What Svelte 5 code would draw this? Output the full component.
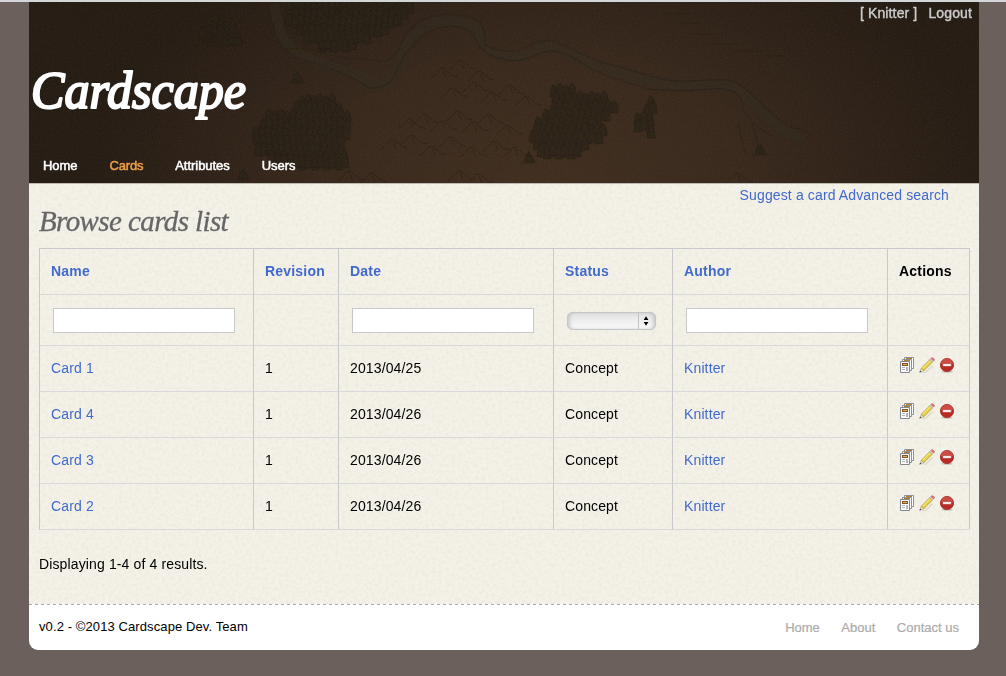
<script>
  const columns = ['Name', 'Revision', 'Date', 'Status', 'Author', 'Actions'];
  const rows = [
    { name: 'Card 1', date: '2013/04/25' },
    { name: 'Card 4', date: '2013/04/26' },
    { name: 'Card 3', date: '2013/04/26' },
    { name: 'Card 2', date: '2013/04/26' }
  ];

  // Woods on the map: each is a stack of [y, fromX, toX] rows of small trees.
  const woods = [
    [[19, 187, 198], [24, 176, 206], [31, 174, 209], [37, 176, 212]],
    [[4, 261, 386], [12, 258, 378], [20, 260, 368], [28, 268, 355], [36, 278, 340], [43, 290, 326]],
    [[99, 273, 308], [107, 265, 314], [115, 240, 318], [123, 231, 321], [131, 227, 320], [139, 225, 316], [147, 229, 317], [155, 240, 318], [162, 256, 316]],
    [[88, 525, 544], [96, 524, 576], [104, 525, 585], [112, 514, 580], [120, 509, 572], [128, 505, 576], [136, 504, 574], [144, 505, 560], [151, 512, 550]],
    [[100, 622, 627], [108, 615, 627], [116, 609, 625], [123, 606, 622], [130, 622, 627]]
  ];
  const trees = woods.flatMap((wood) =>
    wood.flatMap(([y, from, to], r) => {
      const out = [];
      for (let x = from + (r % 2) * 3; x <= to; x += 6) out.push({ x, y: y + ((x * 7) % 4) - 2 });
      return out;
    })
  );
  const huts = [[268, 78], [214, 175], [500, 158], [731, 150]];
  const hills = [
    [415, 70], [433, 62], [452, 73], [425, 90], [447, 84], [465, 94], [482, 87], [499, 98],
    [382, 121], [397, 116], [415, 123], [430, 113], [446, 124], [461, 116], [480, 127],
    [365, 141], [384, 137], [404, 148], [423, 139], [444, 149], [467, 143], [487, 149],
    [322, 173], [344, 175], [432, 173], [451, 176], [710, 175]
  ];
</script>

<div class="page">
  <header>
    <svg class="map" viewBox="0 0 950 181" aria-hidden="true">
      <defs>
        <radialGradient id="glow" gradientUnits="userSpaceOnUse" cx="0" cy="0" r="1" gradientTransform="translate(510 181) scale(450 270)">
          <stop offset="0" stop-color="#402f20" />
          <stop offset=".45" stop-color="#39291d" />
          <stop offset=".78" stop-color="#2d2118" />
          <stop offset="1" stop-color="#251c14" />
        </radialGradient>
        <filter id="grain" x="0" y="0" width="100%" height="100%">
          <feTurbulence type="fractalNoise" baseFrequency=".6 .8" numOctaves="2" seed="4" />
          <feColorMatrix values="0 0 0 0 .42  0 0 0 0 .34  0 0 0 0 .24  .5 0 0 0 -.18" />
        </filter>
        <filter id="soft"><feGaussianBlur stdDeviation=".6" /></filter>
      </defs>
      <rect width="950" height="181" fill="url(#glow)" />
      <g filter="url(#soft)" fill="none" stroke="#28241b" stroke-width="1.3" opacity=".6">
        <path stroke="#302c22" stroke-width="10" opacity=".75" d="M245 2C250 28 251 42 275 54S320 66 343 80S368 58 380 39S410 17 434 20S448 46 466 51S490 57 504 50S518 43 534 50S560 60 584 68S620 80 648 82S694 78 709 89S730 109 746 122S764 130 774 139" />
        <path d="M238 2C244 30 248 50 275 58S320 73 341 86Q361 87 368 68C378 44 400 23 426 24S440 51 473 57Q491 62 511 51Q528 45 548 58T584 76T620 87Q650 90 682 87T714 107Q728 128 744 134" />
        <path d="M252 2C257 20 259 39 283 47S318 57 333 57S362 67 372 42S407 8 437 14S447 42 463 46S484 52 499 44S522 36 541 46S566 59 590 65S625 77 646 79S695 73 710 82S735 106 751 118S769 123 782 133" />
        <path d="M709 121L716 151M723 121L731 151" />
        <path opacity=".5" d="M198 4Q165 15 160 32T138 51Q132 69 118 81M130 116Q122 132 125 148T109 180" />
      </g>
      <g filter="url(#soft)" fill="#282018" stroke="#1f1913" stroke-width=".6" opacity=".68">
        {#each trees as t}
          <path d="M{t.x - 4} {t.y + 6}Q{t.x - 3} {t.y - 7} {t.x} {t.y - 6}Q{t.x + 4} {t.y - 5} {t.x + 4} {t.y + 6}Z" />
        {/each}
        {#each huts as [x, y]}
          <path d="M{x - 8} {y + 3}h16M{x - 5} {y + 2}l2-6 3-4 3 4 3 6Z" />
        {/each}
        <path d="M500 155v-11M171 36h40M170 40h24M230 153h60M243 165h68M258 47h50M500 141h65M514 153h40" />
      </g>
      <g filter="url(#soft)" fill="none" stroke="#261a12" opacity=".5">
        {#each hills as [x, y]}
          <path d="M{x - 13} {y + 6}Q{x - 6} {y} {x - 3} {y - 4}Q{x} {y - 5} {x + 4} {y}T{x + 14} {y + 5}M{x - 1} {y - 2}l3 7" />
        {/each}
        <path opacity=".6" d="M634 12h28M650 21h20M661 32h23M680 42h29M704 49h30M735 54h21" />
      </g>
      <rect width="950" height="181" filter="url(#grain)" opacity=".28" />
    </svg>
    <div class="session"><a href="#user">[ Knitter ]</a><a href="#logout">Logout</a></div>
    <h1>
      <svg width="222" height="70" viewBox="0 0 222 70">
        <text x="2" y="48" textLength="215" lengthAdjust="spacingAndGlyphs">Cardscape</text>
      </svg>
    </h1>
    <nav class="main-nav">
      <a href="#home">Home</a><a class="active" href="#cards">Cards</a><a href="#attributes">Attributes</a><a href="#users">Users</a>
    </nav>
  </header>

  <main>
    <svg class="paper" aria-hidden="true">
      <filter id="paper" x="0" y="0" width="100%" height="100%">
        <feTurbulence type="fractalNoise" baseFrequency=".3" numOctaves="3" seed="8" />
        <feColorMatrix values="0 0 0 0 .62  0 0 0 0 .6  0 0 0 0 .5  1.3 0 0 0 -.52" />
      </filter>
      <rect width="100%" height="100%" filter="url(#paper)" opacity=".34" />
    </svg>
    <div class="tools"><a href="#suggest">Suggest a card</a> <a href="#search">Advanced search</a></div>
    <h2>Browse cards list</h2>
    <table>
      <colgroup><col class="wide" /><col class="rev" /><col class="date" /><col class="status" /><col class="author" /><col class="actions" /></colgroup>
      <thead>
        <tr>
          {#each columns as c}
            <th>{#if c === 'Actions'}{c}{:else}<a href="#sort">{c}</a>{/if}</th>
          {/each}
        </tr>
        <tr class="filters">
          <td><input type="text" /></td>
          <td></td>
          <td><input type="text" /></td>
          <td>
            <div class="select">
              <svg width="17" height="16" viewBox="0 0 17 16"><path d="M5 7l2.500-4 2.500 4zM5 9h5l-2.500 4z" /></svg>
            </div>
          </td>
          <td><input type="text" /></td>
          <td></td>
        </tr>
      </thead>
      <tbody>
        {#each rows as row}
          <tr>
            <td><a href="#card">{row.name}</a></td>
            <td>1</td>
            <td>{row.date}</td>
            <td>Concept</td>
            <td><a href="#author">Knitter</a></td>
            <td>
              <div class="icons">
                <svg width="16" height="16" viewBox="0 0 16 16">
                  <path fill="#fff" stroke="#8b9196" d="M5.500.5h9v11h-9z" />
                  <path fill="#b87932" d="M7 1h6v1H7z" />
                  <path fill="#fff" stroke="#8b9196" d="M3.500 2.500h9v11h-9z" />
                  <path fill="#b87932" d="M5 3h6v1H5z" />
                  <path fill="#fafafa" stroke="#84898d" d="M1.500 4.500h9v11h-9z" />
                  <path fill="#8a5524" d="M3 6h6v3H3z" />
                  <path fill="#dfab58" d="M4 7h4v1H4z" />
                  <path fill="#b4b6b8" d="M3 10h3v1H3zM3 12h3v1H3zM7 10h2v4H7z" />
                </svg>
                <svg width="16" height="16" viewBox="0 0 16 16">
                  <path fill="#000" opacity=".1" d="M1 15.500l5-.5 7-7 1 1-7 7z" />
                  <path fill="#e9d248" stroke="#a08a30" stroke-width=".7" d="M2.300 11.200L11 2.500l2.500 2.500-8.700 8.700z" />
                  <path stroke="#fdf08a" stroke-width="1" d="M3.500 11.300l8-8" />
                  <path fill="#f3dfb9" stroke="#94825f" stroke-width=".5" d="M2.300 11.200l2.500 2.500-4 1.600z" />
                  <path fill="#333" d="M1.200 13.800l1 1-1.800.7z" />
                  <path fill="#ddd" stroke="#929292" stroke-width=".5" d="M10.800 2.600l1.200-1.200 2.600 2.600-1.200 1.200z" />
                  <path fill="#f07874" stroke="#c9514c" stroke-width=".6" d="M12 1.400q1.100-1.400 2.600-.1 1.600 1.300 0 2.700z" />
                </svg>
                <svg width="16" height="16" viewBox="0 0 16 16">
                  <ellipse cx="8" cy="14.700" rx="5.500" ry="1.100" fill="#000" opacity=".18" />
                  <circle cx="8" cy="8" r="6.600" fill="#b92a24" stroke="#ac3f39" />
                  <path fill="#d8635c" opacity=".6" d="M2 7a6 5.500 0 0 1 12 0q-6 1.500-12 0" />
                  <path fill="#fff" stroke="#a62c26" stroke-width=".5" d="M3.700 6.700h8.600v2.600H3.700z" />
                </svg>
              </div>
            </td>
          </tr>
        {/each}
      </tbody>
    </table>
    <p>Displaying 1-4 of 4 results.</p>
  </main>

  <footer>
    <span>v0.2 - ©2013 Cardscape Dev. Team</span>
    <nav><a href="#home">Home</a><a href="#about">About</a><a href="#contact">Contact us</a></nav>
  </footer>
</div>

<style>
  :global(body) {
    background: #6b605b;
    border-top: 2px solid #d4d7da;
    font: 14px/20px 'Liberation Sans', Arial, sans-serif;
    letter-spacing: .13px;
    color: #000;
    min-height: 674px;
    box-sizing: border-box;
    overflow: hidden;
  }
  a { color: #426acb; text-decoration: none; }
  .page { width: 950px; margin-left: 29px; }

  header {
    position: relative;
    height: 181px;
    background: #241b13;
    overflow: hidden;
    display: flex;
    flex-direction: column;
  }
  .map { position: absolute; inset: 0; width: 950px; height: 181px; }
  .session, h1, .main-nav { position: relative; }
  .session { display: flex; justify-content: flex-end; gap: 11px; padding: 1px 7px 0 0; height: 20px; letter-spacing: .13px; }
  .session a { color: #ccc; -webkit-text-stroke: .4px #ccc; }
  h1 { margin: 37px 0 0; height: 70px; }
  h1 svg { display: block; overflow: visible; }
  h1 text {
    font: italic 400 53px 'Liberation Serif', serif;
    letter-spacing: 0;
    fill: #fff;
    stroke: #fff;
    stroke-width: 2.2px;
    stroke-linejoin: round;
  }
  .main-nav { display: flex; gap: 32px; padding: 26px 0 0 14px; font-size: 13px; letter-spacing: -.04px; }
  .main-nav a { color: #fff; -webkit-text-stroke: .5px currentColor; }
  .main-nav a.active { color: #efa04a; letter-spacing: -.2px; }

  main {
    position: relative;
    height: 421px;
    box-sizing: border-box;
    padding: 0 10px;
    background: #f4f1e8;
    border-top: 1px solid #bdb8b0;
  }
  .paper { position: absolute; inset: 0; width: 100%; height: 100%; }
  .tools, h2, table, p { position: relative; }
  .tools { text-align: right; padding: 1px 20px 0 0; height: 21px; box-sizing: border-box; }
  h2 {
    margin: 0;
    height: 43px;
    font: italic 400 29px/32px 'Liberation Serif', serif;
    letter-spacing: -.6px;
    -webkit-text-stroke: .3px #666;
    color: #666;
    white-space: nowrap;
  }

  table {
    table-layout: fixed;
    width: 931px;
    border-spacing: 0;
    border-left: 1px solid #c9c9c9;
    border-top: 1px solid #c9c9c9;
    box-sizing: border-box;
  }
  .wide { width: 214px; }
  .rev { width: 85px; }
  .date { width: 215px; }
  .status { width: 119px; }
  .author { width: 215px; }
  .actions { width: 82px; }
  th, td {
    box-sizing: border-box;
    height: 46px;
    padding: 0 0 2px 11px;
    border-right: 1px solid #c9c9c9;
    border-bottom: 1px solid #d9d9d9;
    text-align: left;
    vertical-align: middle;
    line-height: 20px;
  }
  th { letter-spacing: .2px; }
  .filters td { height: 51px; padding-bottom: 0; }
  input {
    display: block;
    width: 182px;
    height: 25px;
    margin: 1px 0 0 2px;
    padding: 0 4px;
    box-sizing: border-box;
    border: 1px solid #c9c9c9;
    background: #fff;
    outline: 0;
  }
  .select {
    display: flex;
    justify-content: flex-end;
    width: 89px;
    height: 18px;
    margin: 2px 0 0 2px;
    box-sizing: border-box;
    border: 1px solid #c6c6c6;
    border-radius: 5px;
    background: linear-gradient(#e2e2e2, #fafafa);
    box-shadow: inset 3px 0 4px -2px #bbb, inset -3px 0 4px -2px #bbb;
  }
  .select svg { width: 16px; border-left: 1px solid #c3c3c3; }
  .icons { display: flex; gap: 4px; margin-top: -5px; }

  p { margin: 24px 0 0; }

  footer {
    height: 46px;
    box-sizing: border-box;
    display: flex;
    justify-content: space-between;
    padding: 13px 20px 0 10px;
    background: linear-gradient(90deg, #aaa 50%, #fff 50%) 0 0 / 6px 1px repeat-x, #fff;
    border-radius: 0 0 9px 9px;
    font-size: 13px;
    letter-spacing: .1px;
  }
  footer nav { display: flex; gap: 21.5px; padding-top: 1px; letter-spacing: 0; }
  footer nav a { color: #aaa; -webkit-text-stroke: .2px #aaa; }
</style>
